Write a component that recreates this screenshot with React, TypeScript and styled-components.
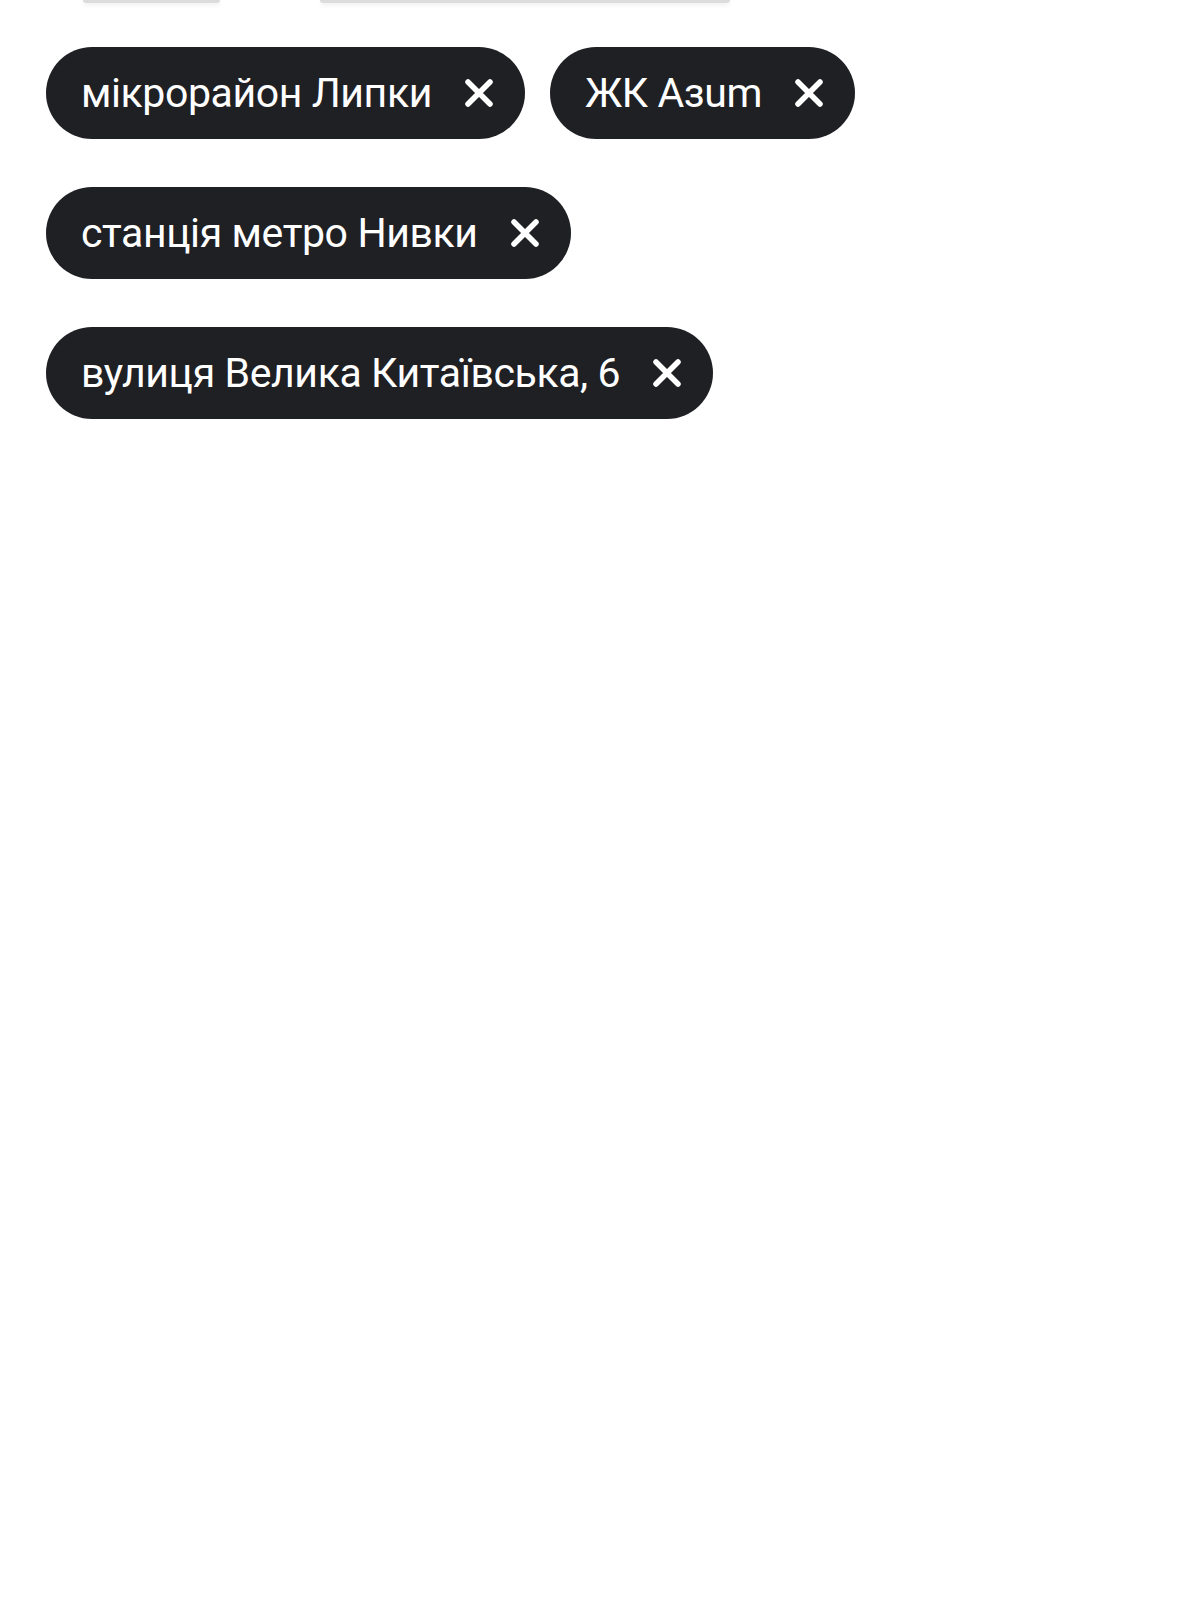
import React from 'react';
import styled, { createGlobalStyle } from 'styled-components';

const tags = [
  'мікрорайон Липки',
  'ЖК Азum',
  'станція метро Нивки',
  'вулиця Велика Китаївська, 6',
];

const GlobalStyle = createGlobalStyle`
  html, body {
    margin: 0;
    padding: 0;
    background: #ffffff;
  }
  body {
    font-family: Roboto, "Noto Sans", sans-serif;
  }
`;

const Page = styled.div`
  width: 1200px;
  min-height: 1600px;
  background: #ffffff;
`;

const TopStrip = styled.div`
  display: flex;
  height: 3px;
  padding-left: 83px;
  gap: 100px;
`;

const CardEdge = styled.div<{ $width: number }>`
  width: ${(p) => p.$width}px;
  height: 3px;
  background: #dcdcdc;
  border-radius: 0 0 6px 6px;
  box-shadow: 0 2px 4px rgba(0, 0, 0, 0.08);
`;

const TagList = styled.div`
  display: flex;
  flex-wrap: wrap;
  align-items: flex-start;
  column-gap: 25px;
  row-gap: 48px;
  padding: 44px 46px 0 46px;
`;

const Chip = styled.div`
  display: flex;
  align-items: center;
  gap: 32px;
  height: 92px;
  padding: 0 31px 0 35px;
  box-sizing: border-box;
  border-radius: 46px;
  background: #1f2024;
  color: #ffffff;
`;

const Label = styled.span`
  font-family: Roboto, "Noto Sans", sans-serif;
  font-size: 41px;
  letter-spacing: -0.4px;
  line-height: 1;
  white-space: nowrap;
`;

const RemoveButton = styled.button`
  display: flex;
  align-items: center;
  justify-content: center;
  width: 30px;
  height: 30px;
  padding: 0;
  border: none;
  background: transparent;
  color: #ffffff;
  cursor: pointer;
`;

const CloseIcon = () => (
  <svg width="30" height="30" viewBox="0 0 30 30" fill="none">
    <path
      d="M4 4 L26 26 M26 4 L4 26"
      stroke="currentColor"
      strokeWidth="5.5"
      strokeLinecap="round"
    />
  </svg>
);

export default function App() {
  return (
    <Page>
      <GlobalStyle />
      <TopStrip>
        <CardEdge $width={137} />
        <CardEdge $width={410} />
      </TopStrip>
      <TagList>
        {tags.map((tag) => (
          <Chip key={tag}>
            <Label>{tag}</Label>
            <RemoveButton aria-label="Видалити">
              <CloseIcon />
            </RemoveButton>
          </Chip>
        ))}
      </TagList>
    </Page>
  );
}
